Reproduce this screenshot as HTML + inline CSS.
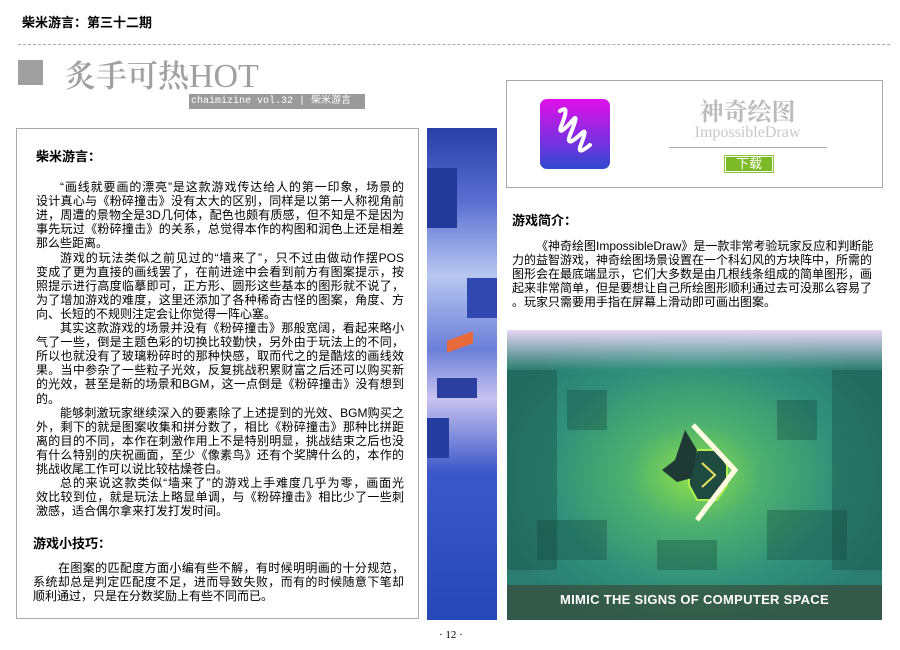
<!DOCTYPE html>
<html><head><meta charset="utf-8"><style>
*{margin:0;padding:0;box-sizing:border-box}
body{width:900px;height:650px;background:#fff;position:relative;overflow:hidden;font-family:"Liberation Sans","Noto Sans CJK SC",sans-serif;color:#000}
.a{position:absolute}
.ln{position:absolute;font-size:12px;line-height:14px;white-space:nowrap;text-align:justify;text-align-last:justify}
.ln.l{text-align-last:left}
.h{position:absolute;font-size:13px;font-weight:bold;font-family:"Noto Sans CJK SC",sans-serif}
.b{position:absolute;background:rgba(20,70,60,.35)}
</style></head><body>
<div class="h" style="left:22px;top:12px;font-size:13px">柴米游言：第三十二期</div>
<div class="a" style="left:18px;top:44px;width:872px;border-top:1px dashed #aaa"></div>
<div class="a" style="left:18px;top:60px;width:25px;height:25px;background:#a0a0a0"></div>
<div class="a" style="left:65px;top:54px;font-family:'Noto Serif CJK SC','Liberation Serif',serif;font-size:31px;color:#a0a0a0;line-height:40px;font-weight:600;white-space:nowrap">炙手可热<span style="font-family:'Liberation Serif',serif;font-weight:normal;font-size:34px">HOT</span></div>
<div class="a" style="left:189px;top:94px;width:176px;height:15px;background:#9a9a9a;color:#fff;font-family:'Liberation Mono','Noto Sans CJK SC',monospace;font-size:10px;line-height:15px;padding-left:2px;white-space:nowrap">chaimizine vol.32 | 柴米游言</div>

<div class="a" style="left:16px;top:128px;width:403px;height:491px;border:1px solid #aaa"></div>
<div class="h" style="left:36px;top:146px">柴米游言：</div>
<div id="L"></div>
<div class="h" style="left:33px;top:533px">游戏小技巧：</div>

<div class="a" style="left:427px;top:128px;width:70px;height:492px;background:linear-gradient(180deg,#2a3fa8 0%,#5a6fd0 15%,#b8c6f0 30%,#6b7fd8 45%,#c9c3f0 55%,#3c57c8 70%,#2748b8 100%);overflow:hidden">
<div class="a" style="left:0;top:40px;width:30px;height:60px;background:#243a9a"></div>
<div class="a" style="left:40px;top:150px;width:30px;height:40px;background:#3048b0"></div>
<div class="a" style="left:10px;top:250px;width:40px;height:20px;background:#2a3f9f"></div>
<div class="a" style="left:0;top:290px;width:22px;height:40px;background:#263da0"></div>
</div>
<div class="a" style="left:447px;top:336px;width:26px;height:12px;background:#e86a3a;transform:skewY(-20deg)"></div>

<div class="a" style="left:506px;top:80px;width:377px;height:108px;border:1px solid #aaa"></div>
<div class="a" style="left:540px;top:99px;width:70px;height:70px;border-radius:7px;background:linear-gradient(180deg,#e010e8,#7a30e0 60%,#2f4ad0)"></div>
<svg class="a" style="left:540px;top:99px" width="70" height="70"><path d="M20 12 Q30 5 22 25 Q16 40 32 22 Q40 12 30 36 Q25 50 42 34 Q48 28 40 48 Q38 56 50 46" stroke="#fff" stroke-width="4" fill="none" stroke-linecap="round"/></svg>
<div class="a" style="left:669px;top:95px;width:157px;text-align:center;font-family:'Noto Serif CJK SC',serif;font-size:24px;font-weight:bold;color:#bbb;line-height:30px">神奇绘图</div>
<div class="a" style="left:669px;top:124px;width:157px;text-align:center;font-family:'Liberation Serif',serif;font-size:16px;color:#c8c8c8">ImpossibleDraw</div>
<div class="a" style="left:669px;top:147px;width:158px;border-top:1px solid #aaa"></div>
<div class="a" style="left:724px;top:155px;width:50px;height:18px;border:1px solid #8cc63f;padding:1px"><div style="background:#7cba28;color:#fff;font-size:13px;text-align:center;line-height:14px;height:14px">下载</div></div>

<div class="h" style="left:512px;top:210px">游戏简介：</div>
<div id="R"></div>

<div class="a" style="left:507px;top:330px;width:375px;height:290px;background:radial-gradient(ellipse at 50% 50%,#8ee04a 0%,#4db070 25%,#2f8f7a 55%,#2a7d70 80%),#2d8070;overflow:hidden">
<div class="a" style="left:0;top:0;width:375px;height:40px;background:linear-gradient(180deg,#e6d6f5,rgba(200,220,230,0))"></div>
<div class="b" style="left:0;top:40px;width:50px;height:200px"></div>
<div class="b" style="left:325px;top:40px;width:50px;height:200px"></div>
<div class="b" style="left:60px;top:60px;width:40px;height:40px"></div>
<div class="b" style="left:270px;top:70px;width:40px;height:40px"></div>
<div class="b" style="left:30px;top:190px;width:70px;height:40px"></div>
<div class="b" style="left:260px;top:180px;width:80px;height:50px"></div>
<div class="b" style="left:150px;top:210px;width:60px;height:30px"></div>
<svg class="a" style="left:150px;top:90px" width="90" height="110"><polygon points="40,30 60,30 70,45 70,65 60,80 40,80 32,65 32,45" fill="#1f4a40" stroke="#aef050" stroke-width="2"/><path d="M45 43 L58 55 L45 67" stroke="#e8e060" stroke-width="2" fill="none"/><path d="M36 5 L78 50 L40 100" stroke="#fffbe0" stroke-width="5" fill="none"/><polygon points="18,40 28,10 40,30 35,58 20,62 5,50" fill="#1f3a35"/></svg>
<div class="a" style="left:0;top:255px;width:375px;height:35px;background:rgba(60,60,40,.55)"></div>
<div class="a" style="left:0;top:262px;width:375px;text-align:center;color:#fff;font-weight:bold;font-size:13px;letter-spacing:.3px">MIMIC THE SIGNS OF COMPUTER SPACE</div>
</div>
<div class="a" style="left:439px;top:629px;font-family:'Liberation Serif',serif;font-size:11px">· 12 ·</div>

<div class="ln" style="left:58px;top:561px;width:346px">在图案的匹配度方面小编有些不解，有时候明明画的十分规范，</div>
<div class="ln" style="left:33px;top:575px;width:371px">系统却总是判定匹配度不足，进而导致失败，而有的时候随意下笔却</div>
<div class="ln l" style="left:33px;top:589px;width:371px">顺利通过，只是在分数奖励上有些不同而已。</div>
<script>
function put(id,lines,x,w,top,step){var el=document.getElementById(id);if(!el)return;var h='';lines.forEach(function(s,i){var ind=s[0]=='>';var t=ind?s.slice(1):s;var last=t[0]=='~';if(last)t=t.slice(1);var xx=ind?x+24:x,ww=ind?w-24:w;h+='<div class="ln'+(last?' l':'')+'" style="left:'+xx+'px;top:'+(top+i*step)+'px;width:'+ww+'px">'+t+'</div>';});el.outerHTML=h;}
put('L',['>“画线就要画的漂亮”是这款游戏传达给人的第一印象，场景的','设计真心与《粉碎撞击》没有太大的区别，同样是以第一人称视角前','进，周遭的景物全是3D几何体，配色也颇有质感，但不知是不是因为','事先玩过《粉碎撞击》的关系，总觉得本作的构图和润色上还是相差','~那么些距离。','>游戏的玩法类似之前见过的“墙来了”，只不过由做动作摆POS','变成了更为直接的画线罢了，在前进途中会看到前方有图案提示，按','照提示进行高度临摹即可，正方形、圆形这些基本的图形就不说了，','为了增加游戏的难度，这里还添加了各种稀奇古怪的图案，角度、方','~向、长短的不规则注定会让你觉得一阵心塞。','>其实这款游戏的场景并没有《粉碎撞击》那般宽阔，看起来略小','气了一些，倒是主题色彩的切换比较勤快，另外由于玩法上的不同，','所以也就没有了玻璃粉碎时的那种快感，取而代之的是酷炫的画线效','果。当中参杂了一些粒子光效，反复挑战积累财富之后还可以购买新','的光效，甚至是新的场景和BGM，这一点倒是《粉碎撞击》没有想到','~的。','>能够刺激玩家继续深入的要素除了上述提到的光效、BGM购买之','外，剩下的就是图案收集和拼分数了，相比《粉碎撞击》那种比拼距','离的目的不同，本作在刺激作用上不是特别明显，挑战结束之后也没','有什么特别的庆祝画面，至少《像素鸟》还有个奖牌什么的，本作的','~挑战收尾工作可以说比较枯燥苍白。','>总的来说这款类似“墙来了”的游戏上手难度几乎为零，画面光','效比较到位，就是玩法上略显单调，与《粉碎撞击》相比少了一些刺','~激感，适合偶尔拿来打发打发时间。'],36,368,180,14.1);
put('R',['>《神奇绘图ImpossibleDraw》是一款非常考验玩家反应和判断能','力的益智游戏，神奇绘图场景设置在一个科幻风的方块阵中，所需的','图形会在最底端显示，它们大多数是由几根线条组成的简单图形，画','起来非常简单，但是要想让自己所绘图形顺利通过去可没那么容易了','~。玩家只需要用手指在屏幕上滑动即可画出图案。'],512,360,239,14.1);
</script>
</body></html>
